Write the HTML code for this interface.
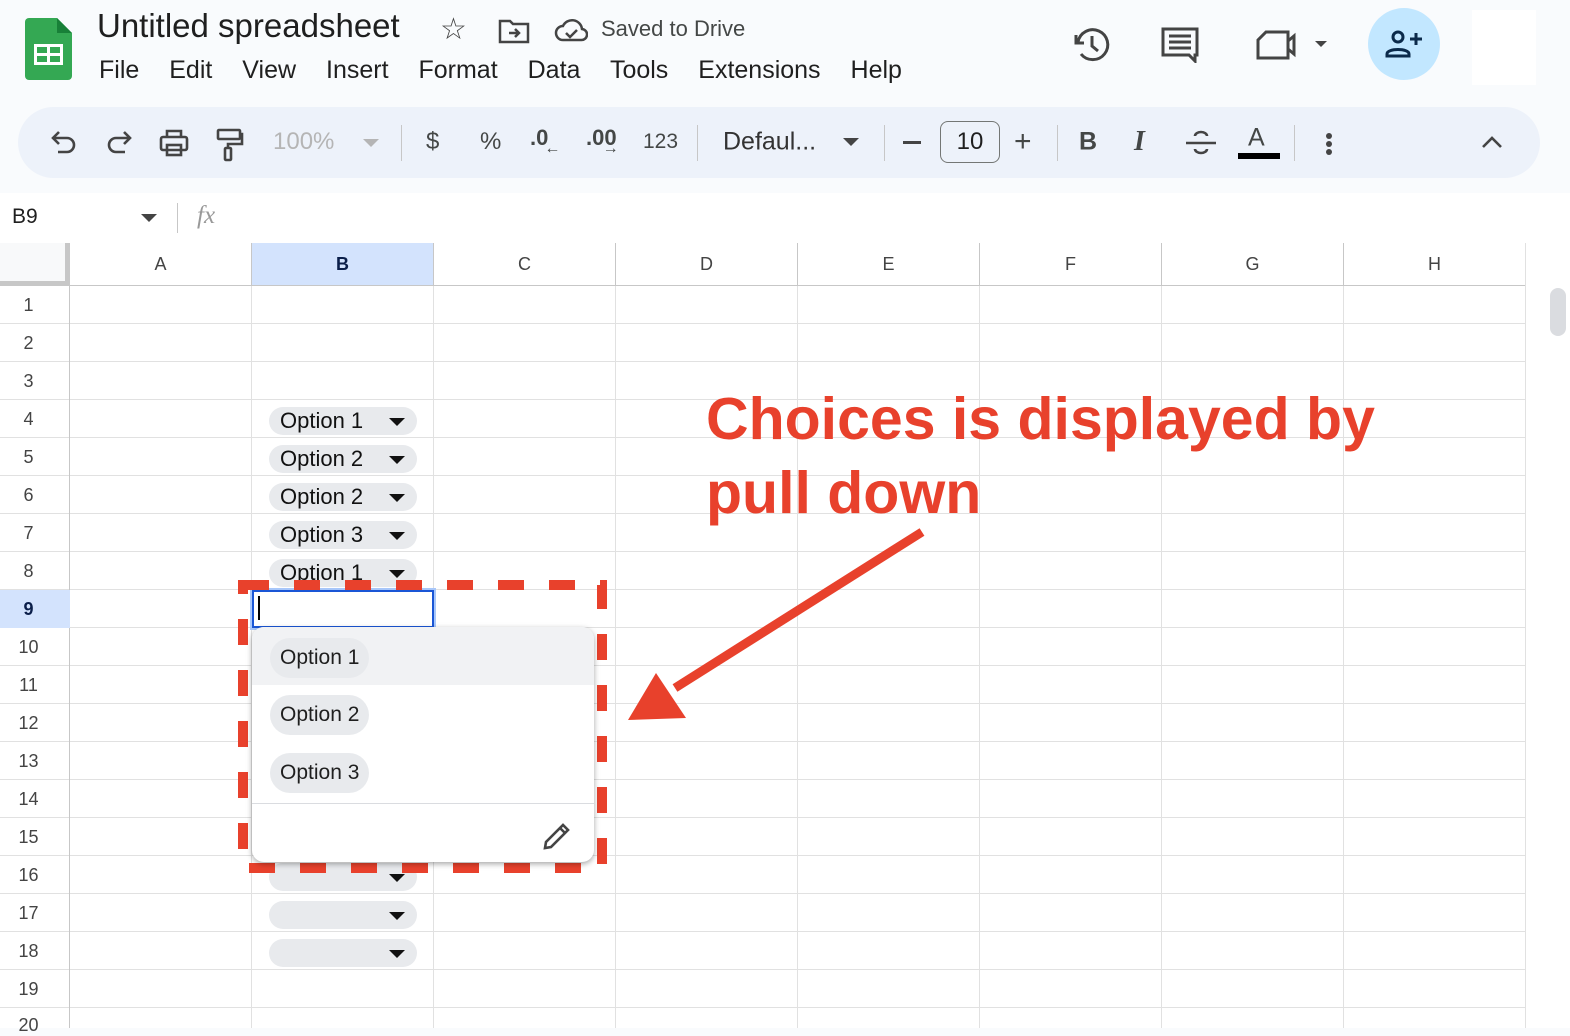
<!DOCTYPE html>
<html><head><meta charset="utf-8"><style>
*{margin:0;padding:0;box-sizing:border-box}
body{width:1570px;height:1028px;overflow:hidden;background:#f9fbfd;font-family:"Liberation Sans",sans-serif;color:#1f1f1f;position:relative}
.a{position:absolute}
.menu span{margin-right:23px}
.tb{position:absolute;top:142px;transform:translateY(-50%);color:#444746;font-size:24px}
.sep{position:absolute;top:125px;width:1px;height:36px;background:#c7c7c7}
.grid{position:absolute;left:70px;top:286px;width:1455px;height:742px;background:#fff;
background-image:linear-gradient(to right,transparent 181px,#e1e1e1 181px),linear-gradient(to bottom,transparent 37px,#e1e1e1 37px);
background-size:182px 38px,182px 38px}
.rn{position:absolute;left:0;width:57px;text-align:center;font-size:18px;color:#444}
.ch{position:absolute;top:243px;height:43px;width:182px;text-align:center;line-height:43px;font-size:18px;color:#444;border-right:1px solid #c7c7c7;border-bottom:1px solid #c7c7c7;background:#fff}
.chip{position:absolute;left:269px;width:148px;height:28px;border-radius:14px;background:#e8eaed;font-size:22px;line-height:28px;padding-left:11px;color:#111}
.chip i{position:absolute;right:12px;top:11px;border-left:8px solid transparent;border-right:8px solid transparent;border-top:8px solid #111}
.opt{position:absolute;left:18px;height:40px;border-radius:20px;background:#e8eaed;font-size:21px;line-height:40px;padding:0 10px;color:#1f1f1f}
</style></head><body>
<svg class="a" style="left:25px;top:18px" width="48" height="62" viewBox="0 0 48 62"><path d="M4 0H32L47 15V58a4 4 0 0 1-4 4H4a4 4 0 0 1-4-4V4a4 4 0 0 1 4-4z" fill="#34a853"/><path d="M32 0L47 15H32z" fill="#188038"/><rect x="9" y="26" width="29" height="21" fill="#fff"/><rect x="12" y="29" width="10" height="6" fill="#34a853"/><rect x="25" y="29" width="10" height="6" fill="#34a853"/><rect x="12" y="38" width="10" height="6" fill="#34a853"/><rect x="25" y="38" width="10" height="6" fill="#34a853"/></svg>
<div class="a" style="left:97px;top:7px;font-size:33px;color:#1f1f1f">Untitled spreadsheet</div>
<div class="a" style="left:440px;top:12px;font-size:30px;color:#444">☆</div>
<svg class="a" style="left:498px;top:18px" width="32" height="26" viewBox="0 0 32 26" fill="none" stroke="#444" stroke-width="2.5"><path d="M2 3h10l3 3h15v18H2z"/><path d="M11 15h10M17 11l4 4-4 4"/></svg>
<svg class="a" style="left:554px;top:18px" width="34" height="24" viewBox="0 0 34 24" fill="none" stroke="#444" stroke-width="2.5"><path d="M9 22a7 7 0 0 1 0-14a10 10 0 0 1 19 3a5.5 5.5 0 0 1-1 11z"/><path d="M12 15l4 4 7-7"/></svg>
<div class="a" style="left:601px;top:16px;font-size:22px;color:#444746">Saved to Drive</div>
<div class="a menu" style="left:99px;top:56px;font-size:25px;color:#1f1f1f"><span>File</span> <span>Edit</span> <span>View</span> <span>Insert</span> <span>Format</span> <span>Data</span> <span>Tools</span> <span>Extensions</span> <span>Help</span></div>
<svg class="a" style="left:1073px;top:26px" width="38" height="38" viewBox="0 0 38 38" fill="none" stroke="#444" stroke-width="3"><path d="M5 16A15 15 0 1 1 8 28"/><path d="M3 9v8h8" /><path d="M19 10v10l6 5"/></svg>
<svg class="a" style="left:1161px;top:27px" width="38" height="36" viewBox="0 0 38 36" fill="none" stroke="#444" stroke-width="3"><path d="M2 2h34v26h-2v6l-6-6H2z"/><path d="M8 9h22M8 15h22M8 21h22"/></svg>
<svg class="a" style="left:1256px;top:30px" width="72" height="30" viewBox="0 0 72 30" fill="none" stroke="#444" stroke-width="3"><path d="M10 2h22v26H2V10z"/><path d="M32 11l6-5v18l-6-5"/><path d="M59 11h12l-6 6z" fill="#444" stroke="none"/></svg>
<div class="a" style="left:1368px;top:8px;width:72px;height:72px;border-radius:50%;background:#c2e7ff"></div>
<svg class="a" style="left:1385px;top:28px" width="40" height="32" viewBox="0 0 40 32" fill="none" stroke="#0b2a4a" stroke-width="3"><circle cx="13" cy="9" r="5"/><path d="M2 28v-2c0-6 22-6 22 0v2z"/><path d="M31 5v12M25 11h12"/></svg>
<div class="a" style="left:1472px;top:10px;width:64px;height:75px;background:#fff"></div>
<div class="a" style="left:18px;top:107px;width:1522px;height:71px;border-radius:36px;background:#edf2fa"></div>
<svg class="a" style="left:50px;top:130px" width="28" height="26" viewBox="0 0 28 26" fill="none" stroke="#444" stroke-width="2.6"><path d="M4 8h13a7 7 0 0 1 0 14H8"/><path d="M9 2L3 8l6 6"/></svg>
<svg class="a" style="left:105px;top:130px" width="28" height="26" viewBox="0 0 28 26" fill="none" stroke="#444" stroke-width="2.6"><path d="M24 8H11a7 7 0 0 0 0 14h9"/><path d="M19 2l6 6-6 6"/></svg>
<svg class="a" style="left:159px;top:128px" width="30" height="30" viewBox="0 0 30 30" fill="none" stroke="#444" stroke-width="2.6"><path d="M8 9V3h14v6"/><rect x="2" y="9" width="26" height="13" rx="2"/><rect x="8" y="17" width="14" height="10"/></svg>
<svg class="a" style="left:215px;top:128px" width="30" height="34" viewBox="0 0 30 34" fill="none" stroke="#444" stroke-width="2.6"><rect x="3" y="2" width="22" height="9" rx="1"/><path d="M25 6h2v10H13v4"/><rect x="10" y="20" width="6" height="12" rx="1"/></svg>
<div class="tb" style="left:273px;color:#b5b5b5">100%</div>
<div class="a" style="left:363px;top:139px;border-left:8px solid transparent;border-right:8px solid transparent;border-top:8px solid #b5b5b5"></div>
<div class="sep" style="left:401px"></div>
<div class="tb" style="left:426px">$</div>
<div class="tb" style="left:480px">%</div>
<div class="tb" style="left:530px;font-weight:bold;font-size:22px;top:138px">.0<span style="font-size:16px;position:relative;top:8px;left:-4px">←</span></div>
<div class="tb" style="left:586px;font-weight:bold;font-size:22px;top:138px">.00<span style="font-size:16px;position:relative;top:8px;left:-14px">→</span></div>
<div class="tb" style="left:643px;font-size:21px">123</div>
<div class="sep" style="left:697px"></div>
<div class="tb" style="left:723px;font-size:25px;color:#333">Defaul...</div>
<div class="a" style="left:843px;top:138px;border-left:8px solid transparent;border-right:8px solid transparent;border-top:8px solid #444"></div>
<div class="sep" style="left:884px"></div>
<div class="a" style="left:903px;top:141px;width:18px;height:2.5px;background:#444"></div>
<div class="a" style="left:940px;top:121px;width:60px;height:42px;border:1.5px solid #747775;border-radius:8px;text-align:center;line-height:40px;font-size:24px;color:#1f1f1f">10</div>
<div class="tb" style="left:1014px;font-size:30px">+</div>
<div class="sep" style="left:1057px"></div>
<div class="tb" style="left:1079px;font-weight:bold;font-size:25px">B</div>
<div class="tb" style="left:1134px;font-style:italic;font-size:28px;font-family:'Liberation Serif',serif;font-weight:bold">I</div>
<svg class="a" style="left:1185px;top:130px" width="32" height="26" viewBox="0 0 32 26" fill="none" stroke="#444" stroke-width="2.6"><path d="M1 13h30"/><path d="M22 6a6 4 0 0 0-12 0M10 19a6 4 0 0 0 12 0"/></svg>
<div class="tb" style="left:1248px;font-size:25px;top:138px">A</div>
<div class="a" style="left:1238px;top:153px;width:42px;height:6px;background:#000"></div>
<div class="sep" style="left:1294px"></div>
<div class="a" style="left:1326px;top:133px;width:6px;height:6px;border-radius:50%;background:#444;box-shadow:0 8px 0 #444,0 16px 0 #444"></div>
<svg class="a" style="left:1481px;top:135px" width="22" height="14" viewBox="0 0 22 14" fill="none" stroke="#444" stroke-width="2.6"><path d="M2 12l9-9 9 9"/></svg>
<div class="a" style="left:0;top:193px;width:1570px;height:50px;background:#fff"></div>
<div class="a" style="left:12px;top:205px;font-size:21px;color:#1f1f1f">B9</div>
<div class="a" style="left:141px;top:214px;border-left:8px solid transparent;border-right:8px solid transparent;border-top:8px solid #444"></div>
<div class="a" style="left:177px;top:203px;width:1px;height:30px;background:#c7c7c7"></div>
<div class="a" style="left:197px;top:202px;font-size:25px;color:#999;font-style:italic;font-family:'Liberation Serif',serif">fx</div>
<div class="a" style="left:0;top:243px;width:70px;height:43px;background:#f8f9fa;border-right:5px solid #c7c7c7;border-bottom:5px solid #c7c7c7"></div>
<div class="ch" style="left:70px">A</div>
<div class="ch" style="left:252px;background:#d3e3fd;color:#0b1f4a;font-weight:bold">B</div>
<div class="ch" style="left:434px">C</div>
<div class="ch" style="left:616px">D</div>
<div class="ch" style="left:798px">E</div>
<div class="ch" style="left:980px">F</div>
<div class="ch" style="left:1162px">G</div>
<div class="ch" style="left:1344px">H</div>
<div class="a" style="left:1525px;top:243px;width:45px;height:785px;background:#fff;border-left:1px solid #e1e1e1"></div>
<div class="a" style="left:1550px;top:288px;width:16px;height:48px;border-radius:8px;background:#dadce0"></div>
<div class="grid"></div>
<div class="a" style="left:0;top:286px;width:70px;height:742px;background:#fff;border-right:1px solid #c7c7c7;background-image:linear-gradient(to bottom,transparent 37px,#e1e1e1 37px);background-size:70px 38px"></div>
<div class="a" style="left:0;top:590px;width:70px;height:38px;background:#d3e3fd"></div>
<div class="rn" style="top:295px">1</div><div class="rn" style="top:333px">2</div><div class="rn" style="top:371px">3</div><div class="rn" style="top:409px">4</div><div class="rn" style="top:447px">5</div><div class="rn" style="top:485px">6</div><div class="rn" style="top:523px">7</div><div class="rn" style="top:561px">8</div><div class="rn" style="top:599px;font-weight:bold;color:#0b1f4a">9</div><div class="rn" style="top:637px">10</div><div class="rn" style="top:675px">11</div><div class="rn" style="top:713px">12</div><div class="rn" style="top:751px">13</div><div class="rn" style="top:789px">14</div><div class="rn" style="top:827px">15</div><div class="rn" style="top:865px">16</div><div class="rn" style="top:903px">17</div><div class="rn" style="top:941px">18</div><div class="rn" style="top:979px">19</div><div class="rn" style="top:1015px">20</div>
<div class="chip" style="top:407px">Option 1<i></i></div>
<div class="chip" style="top:445px">Option 2<i></i></div>
<div class="chip" style="top:483px">Option 2<i></i></div>
<div class="chip" style="top:521px">Option 3<i></i></div>
<div class="chip" style="top:559px">Option 1<i></i></div>
<div class="chip" style="top:863px"><i></i></div>
<div class="chip" style="top:901px"><i></i></div>
<div class="chip" style="top:939px"><i></i></div>
<div class="a" style="left:250px;top:588px;width:186px;height:42px;border:2px solid #a8c7fa"></div>
<div class="a" style="left:252px;top:590px;width:182px;height:38px;border:2.5px solid #1a56d6;background:#fff"></div>
<div class="a" style="left:258px;top:596px;width:2px;height:24px;background:#000"></div>
<svg class="a" style="left:230px;top:572px" width="390" height="310"><rect x="13" y="13" width="359" height="283" fill="none" stroke="#e8412c" stroke-width="10" stroke-dasharray="26 25"/></svg>
<div class="a" style="left:252px;top:627px;width:342px;height:235px;background:#fff;border-radius:12px;box-shadow:0 2px 6px rgba(0,0,0,.35);overflow:hidden">
<div class="a" style="left:0;top:0;width:342px;height:58px;background:#f1f2f4"></div>
<div class="opt" style="top:11px">Option 1</div>
<div class="opt" style="top:68px">Option 2</div>
<div class="opt" style="top:126px">Option 3</div>
<div class="a" style="left:0;top:176px;width:342px;height:1px;background:#dadce0"></div>
<svg class="a" style="left:290px;top:194px" width="30" height="30" viewBox="0 0 30 30" fill="none" stroke="#444" stroke-width="2.6"><path d="M3 27l1-6L21 4l5 5L9 26z"/><path d="M18 7l5 5"/></svg>
</div>
<div class="a" style="left:706px;top:382px;font-size:59px;font-weight:bold;color:#e8412c;line-height:74px">Choices is displayed by<br>pull down</div>
<svg class="a" style="left:620px;top:520px" width="320" height="210" viewBox="0 0 320 210"><path d="M302 12L55 168" stroke="#e8412c" stroke-width="9"/><path d="M8 200L36 153L66 198z" fill="#e8412c"/></svg>
</body></html>
